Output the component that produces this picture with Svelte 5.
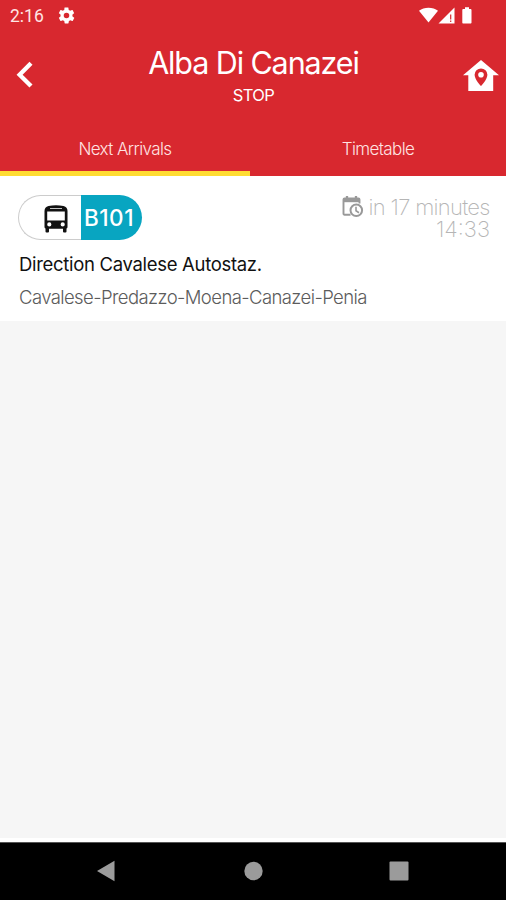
<script>
  const tabs = ['Next Arrivals', 'Timetable'];
  let active = $state(0);
</script>

<div class="screen">
  <header>
    <div class="status">
      <span class="clock">2:16</span>
      <svg class="gear" width="19" height="19" viewBox="0 0 24 24" fill="#fff"><path fill-rule="evenodd" d="M19.4 13c.1-.3.1-.7.1-1s0-.7-.1-1l2.1-1.7c.2-.1.2-.4.1-.6l-2-3.5c-.1-.2-.4-.3-.6-.2l-2.500 1c-.5-.4-1.100-.7-1.700-1l-.4-2.600c0-.2-.2-.4-.5-.4h-4c-.2 0-.4.2-.5.4L9.200 5c-.6.3-1.200.6-1.700 1L5 5c-.2-.1-.5 0-.6.2l-2 3.500c-.1.2-.1.5.1.6L4.600 11c-.1.3-.1.7-.1 1s0 .7.100 1l-2.100 1.700c-.2.100-.2.400-.1.600l2 3.500c.1.200.4.300.6.200l2.500-1c.5.400 1.100.7 1.700 1l.4 2.600c0 .2.200.4.500.4h4c.2 0 .4-.2.500-.4l.4-2.600c.6-.3 1.200-.6 1.700-1l2.500 1c.2.100.5 0 .6-.2l2-3.500c.1-.2.100-.5-.1-.6zM12 15.500a3.500 3.500 0 1 1 0-7 3.500 3.500 0 0 1 0 7z"/></svg>
      <svg class="signals" width="56" height="18" viewBox="0 0 56 18" fill="#fff">
        <path d="M0 3.800C5-.4 14-.4 19 3.800L9.500 15.500z"/>
        <path d="M35.500.500V16.500H19.500z"/>
        <path d="M31.700 7.500v5M31.700 13.500v1.500" stroke="#d8282f" stroke-width="1.200"/>
        <path d="M46 .3h4v1.700h1.400c.7 0 1.100.4 1.100 1.100V15.400c0 .7-.4 1.100-1.100 1.100h-7c-.7 0-1.100-.4-1.100-1.100V3.100c0-.7.4-1.100 1.100-1.100H46z"/>
      </svg>
    </div>
    <div class="bar">
      <svg class="back" width="20" height="28" viewBox="0 0 20 28"><path d="M16 2.300L4.600 13.700L16 25.100" fill="none" stroke="#fff" stroke-width="4.300"/></svg>
      <div class="heading">
        <h1>Alba Di Canazei</h1>
        <p>STOP</p>
      </div>
      <svg class="home" width="36" height="32" viewBox="0 0 36 32" fill="#fff"><path fill-rule="evenodd" d="M18 0L36 15.300H30.200V31H5.300V15.300H0zM18 8.400a6.400 6.400 0 0 0-6.400 6.400c0 4.800 6.400 11.400 6.400 11.400s6.400-6.600 6.400-11.400A6.400 6.400 0 0 0 18 8.400z"/><circle cx="18" cy="14.800" r="2.800"/></svg>
    </div>
    <nav>
      {#each tabs as tab, i}
        <button class:active={active === i} onclick={() => (active = i)}>{tab}</button>
      {/each}
    </nav>
  </header>

  <section class="arrival">
    <div class="top">
      <div class="badge">
        <div class="vehicle">
          <svg width="24" height="28" viewBox="0 0 24 28"><path fill="#111" fill-rule="evenodd" d="M4.500 1Q12-.7 19.500 1Q23.500 2 23.500 6V22Q23.500 23 22.500 23.500V26.500Q22.500 27.500 21.500 27.500H20Q19 27.500 19 26.500V23.700H5V26.500Q5 27.500 4 27.500H2.500Q1.500 27.500 1.500 26.500V23.500Q.5 23 .5 22V6Q.5 2 4.500 1zM6 3.200V4H18V3.200zM3.200 6.500V15.500H20.800V6.500zM5.300 17.300a2.100 2.100 0 1 0 0 4.200 2.100 2.100 0 0 0 0-4.200zM18.700 17.300a2.100 2.100 0 1 0 0 4.200 2.100 2.100 0 0 0 0-4.200z"/></svg>
        </div>
        <div class="line">B101</div>
      </div>
      <div class="when">
        <div class="eta">
          <svg width="22" height="23" viewBox="0 0 22 23" fill="none" stroke="#999"><path d="M8.500 19.700H2.500Q1.500 19.700 1.500 18.700V4.500Q1.500 3.500 2.500 3.500H16.500Q17.500 3.500 17.500 4.500V8.500" stroke-width="1.900"/><path d="M1 5.200H18" stroke-width="4"/><path d="M5 1V4M14 1V4" stroke-width="2.300"/><circle cx="14.300" cy="15.300" r="5.800" stroke-width="2"/><path d="M14 11.700V15.800L17 17.700" stroke-width="1.600"/></svg>
          <span class="mins">in 17 minutes</span>
        </div>
        <div class="time">14:33</div>
      </div>
    </div>
    <p class="direction">Direction Cavalese Autostaz.</p>
    <p class="route">Cavalese-Predazzo-Moena-Canazei-Penia</p>
  </section>

  <main></main>

  <footer>
    <svg width="20" height="22" viewBox="0 0 20 22"><path d="M1 11L18.500.800V21.200z" fill="#9b9b9b"/></svg>
    <svg width="20" height="20" viewBox="0 0 20 20"><circle cx="10.500" cy="10" r="9.200" fill="#9b9b9b"/></svg>
    <svg width="20" height="20" viewBox="0 0 20 20"><rect x=".5" y=".5" width="19" height="19" rx="1" fill="#9b9b9b"/></svg>
  </footer>
</div>

<style>
  :global(body) { margin: 0; }
  .screen { width: 506px; height: 900px; display: flex; flex-direction: column; background: #f6f6f6; font-family: Inter, "Liberation Sans", sans-serif; overflow: hidden; }
  h1, p { margin: 0; font-weight: 400; white-space: nowrap; }
  span, .time { white-space: nowrap; }
  svg { flex: none; display: block; }
  header { height: 176px; background: #d8282f; color: #fff; display: flex; flex-direction: column; }
  .status { height: 32px; display: flex; align-items: center; padding: 0 31px 0 10px; box-sizing: border-box; }
  .clock { font: 400 17.500px/32px Roboto, sans-serif; width: 47px; color: #ffe5e4; }
  .gear { margin-top: -1px; }
  .signals { margin-left: auto; margin-top: -1px; }
  .bar { height: 90px; display: flex; justify-content: space-between; padding: 0 7px 0 15px; }
  .back { margin-top: 29px; }
  .home { margin-top: 28px; }
  .heading { width: 300px; text-align: center; margin-left: 9px; }
  h1 { font-size: 30.500px; line-height: 36px; margin-top: 13px; font-weight: 375; letter-spacing: -1.1px; }
  .heading p { font-size: 16.500px; line-height: 20px; margin-top: 4px; letter-spacing: -.6px; }
  nav { height: 54px; display: flex; }
  nav button { flex: 1; border: 0; padding: 1px 0 0; background: none; color: #ffe3e2; font: 350 17px/53px Inter, sans-serif; letter-spacing: -.6px; box-sizing: border-box; height: 54px; }
  nav button:first-child { flex: 0 0 250px; }
  nav button.active { box-shadow: inset 0 -5px #ffdc32; }
  .arrival { height: 145px; background: #fff; box-sizing: border-box; padding: 19px 16px 0 18px; }
  .top { display: flex; justify-content: space-between; height: 56px; }
  .badge { width: 124px; height: 45px; display: flex; }
  .vehicle { width: 63px; height: 45px; box-sizing: border-box; border: 1px solid #ccc; border-right: 0; border-radius: 23px 0 0 23px; background: #fff; padding: 9px 0 0 25px; }
  .line { flex: 1; height: 45px; box-sizing: border-box; background: #08a5c1; border-radius: 0 23px 23px 0; color: #fff; font-size: 22.500px; line-height: 45px; font-weight: 500; padding-left: 3px; letter-spacing: .5px; }
  .when { color: #b5b5b5; font-weight: 200; font-size: 22px; text-align: right; }
  .eta { display: flex; justify-content: flex-end; height: 23px; line-height: 23px; gap: 5px; }
  .mins { letter-spacing: -.7px; font-size: 22px; line-height: 24px; margin-right: .3px; }
  .time { line-height: 23px; }
  .direction { font-size: 18.500px; line-height: 26px; color: #111; margin-left: 1px; letter-spacing: -.31px; }
  .route { font-size: 18.500px; line-height: 26px; margin: 7px 0 0 1px; color: #5c5c5c; font-weight: 300; letter-spacing: -.59px; }
  main { flex: 1; border-bottom: 4px solid #fff; }
  footer { height: 58px; background: #000; border-top: 1px solid #555; box-sizing: border-box; display: flex; align-items: center; justify-content: space-between; padding: 0 97px 1px 96px; }
</style>
